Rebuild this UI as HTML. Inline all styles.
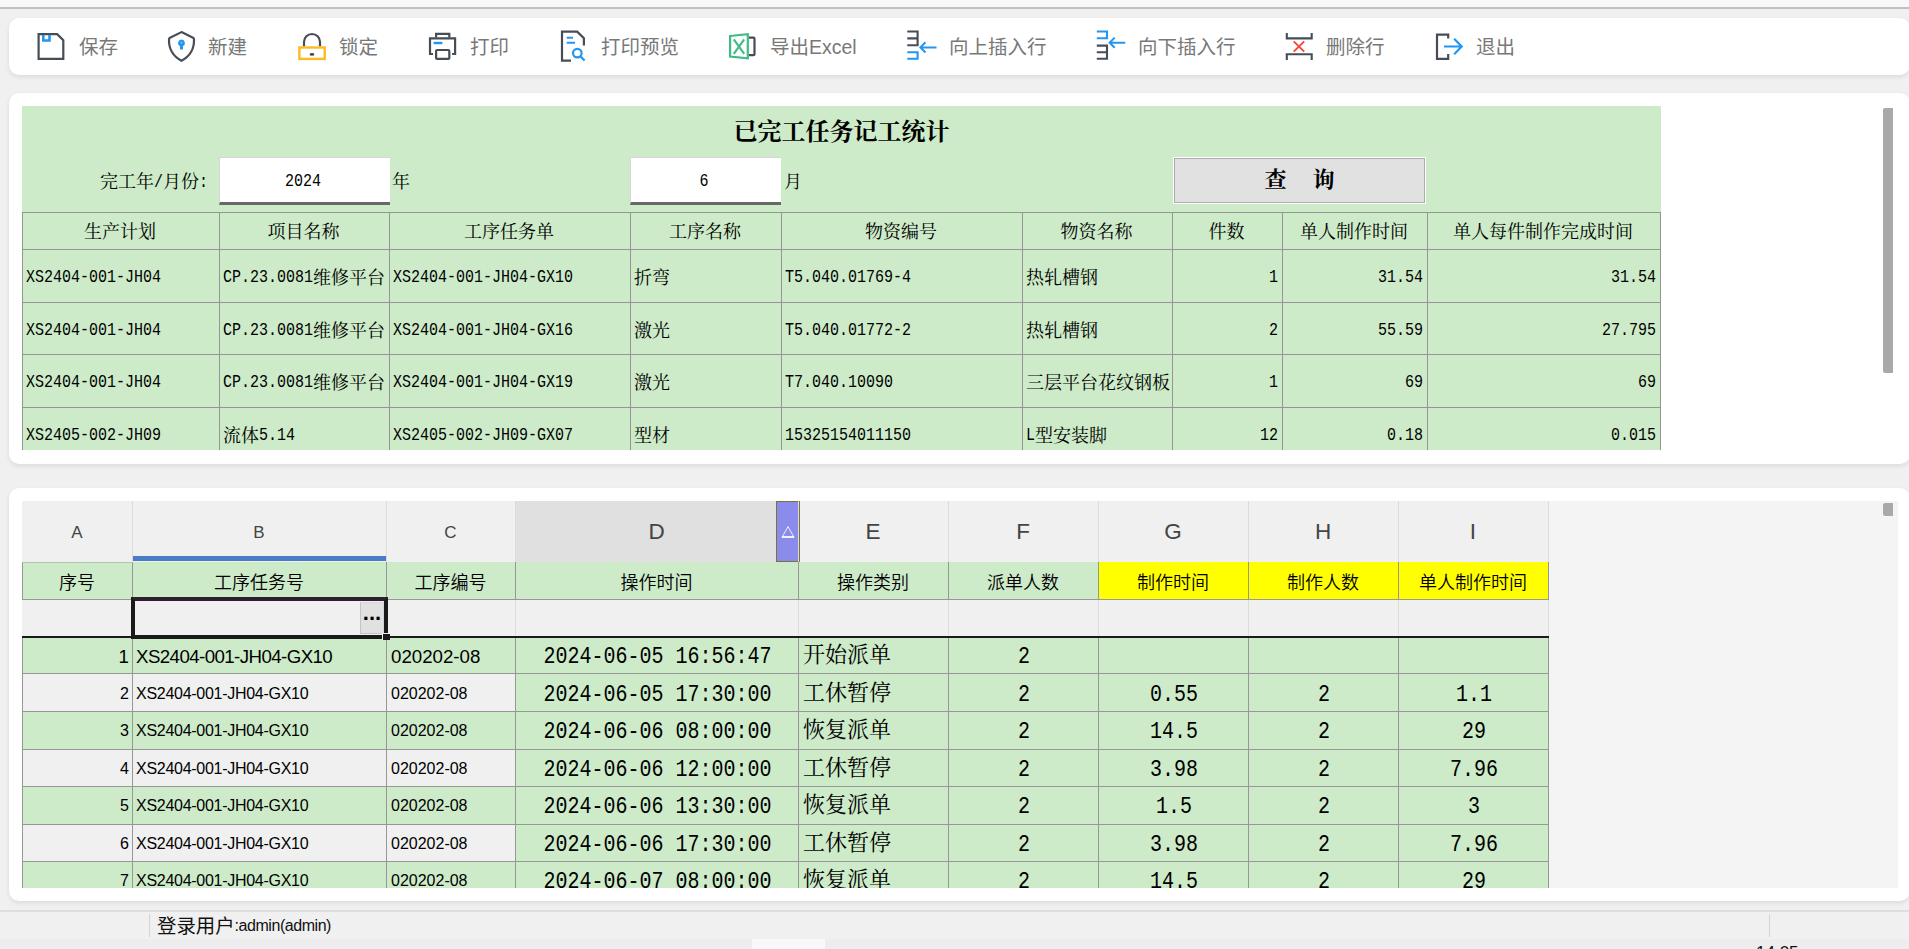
<!DOCTYPE html>
<html lang="zh-CN"><head><meta charset="utf-8"><title>已完工任务记工统计</title><style>
*{box-sizing:border-box;margin:0;padding:0}
html,body{width:1909px;height:949px;overflow:hidden;background:#f0f0f0}
body{position:relative;font-family:"Liberation Sans","Noto Sans CJK SC",sans-serif;color:#000}
.abs{position:absolute}
.topstrip{left:0;top:0;width:1909px;height:9px;background:#f8f8f8;border-bottom:2px solid #c0c0c0}
.panel{background:#fff;border-radius:10px;box-shadow:0 2px 5px rgba(0,0,0,.09)}
.tb{position:absolute;top:19px;height:57px;font-family:"Liberation Sans","Noto Sans CJK SC",sans-serif;font-size:19.5px;font-weight:400;color:#787878;line-height:57px;white-space:nowrap}
.tb svg{position:absolute;top:0;left:0}
.song{font-family:"Liberation Serif","Noto Serif CJK SC",serif}
.m{font-family:"Liberation Mono",monospace;font-size:15px;display:inline-block;position:relative;top:-1.5px;transform:scaleY(1.2);transform-origin:50% 60%}
.t1{position:absolute;font-family:"Liberation Serif","Noto Serif CJK SC",serif;font-size:18px;line-height:20px;white-space:nowrap;color:#000}
.vl{position:absolute;width:1px;background:#959595}
.hl{position:absolute;height:1px;background:#959595}
.g2{position:absolute;white-space:nowrap}
</style></head><body>
<div class="abs topstrip"></div>
<div class="abs panel" style="left:9px;top:18px;width:1901px;height:57px"></div>
<svg class="abs" style="left:0;top:18px" width="1909" height="57" viewBox="0 18 1909 57"><path d="M38.6 34.2 H57.2 L63.3 40.3 V58.9 H38.6 Z" fill="none" stroke-width="2.2" stroke-linejoin="miter" stroke="#464d57"/><path d="M42 35 H50.8 V41.8 H42 Z M44.6 35 V39.3 H48.2 V35 Z" fill="#2196f3" fill-rule="evenodd"/><path d="M181.5 32.1 L193 37.7 Q194 38.2 194 39.4 C194.3 48.6 189.5 56.5 181.5 60.8 C173.5 56.5 168.7 48.6 169 39.4 Q169 38.2 170 37.7 Z" fill="none" stroke-width="2.2" stroke-linejoin="miter" stroke="#464d57" stroke-linejoin="round"/><path d="M181.5 39.6 a3.4 3.4 0 0 1 1.5 6.45 V49.6 H180 V46.05 A3.4 3.4 0 0 1 181.5 39.6 Z" fill="#2196f3"/><circle cx="181.5" cy="42.6" r="0.9" fill="#9fd2fb"/><path d="M304 46.5 V42 a8 8 0 0 1 16 0 V46.5" fill="none" stroke-width="2.2" stroke-linejoin="miter" stroke="#464d57"/><rect x="299.4" y="47.5" width="25.3" height="11.4" fill="none" stroke="#fdbb1f" stroke-width="2.4"/><ellipse cx="312" cy="54.4" rx="2.4" ry="1.3" fill="#464d57"/><path d="M436.1 37.5 V33.9 H449.3 V37.5" fill="none" stroke-width="2.2" stroke-linejoin="miter" stroke="#464d57"/><path d="M433 54 H430 V38.4 H455.1 V54 H452.1" fill="none" stroke-width="2.2" stroke-linejoin="miter" stroke="#464d57"/><rect x="436.1" y="50" width="13.2" height="8.9" rx="1" fill="none" stroke-width="2.2" stroke-linejoin="miter" stroke="#464d57"/><path d="M433.6 43 H442.4" fill="none" stroke="#2196f3" stroke-width="2.4"/><path d="M571 60.6 H562 V31.6 H577.2 L583.9 38.3 V45.6" fill="none" stroke-width="2.2" stroke-linejoin="miter" stroke="#464d57" stroke-linejoin="round"/><path d="M566.7 37.7 H573 M566.7 42.7 H575" fill="none" stroke="#2196f3" stroke-width="2.1"/><circle cx="577.3" cy="53.1" r="4.3" fill="none" stroke="#2196f3" stroke-width="2.2"/><path d="M580.5 56.4 L584.6 60.6" fill="none" stroke="#2196f3" stroke-width="2.2"/><path d="M730.1 36 L747.8 34.2 V58.4 L730.1 56.5 Z" fill="none" stroke-width="2.2" stroke-linejoin="miter" stroke="#3fbb86" stroke-linejoin="round"/><path d="M733.8 39.3 L744.2 53.8 M744.2 39.3 L733.8 53.8" fill="none" stroke="#3fbb86" stroke-width="2.1"/><path d="M749 37.6 H753.5 a1 1 0 0 1 1 1 V54.2 a1 1 0 0 1 -1 1 H749" fill="none" stroke-width="2.2" stroke-linejoin="miter" stroke="#464d57"/><path d="M907.3 31.5 H917.6 V45.3 H907.3 M907.3 38.4 H917.6" fill="none" stroke-width="2.1" stroke-linejoin="miter" stroke="#464d57"/><path d="M907.3 52.2 H917.6 V58.8 H907.3" fill="none" stroke-width="2.1" stroke-linejoin="miter" stroke="#2196f3"/><path d="M936.5 47.4 H920.5 M925.5 42.3 L920.4 47.4 L925.5 52.5" fill="none" stroke-width="2" stroke-linejoin="miter" stroke="#2196f3"/><path d="M1096.8 31.5 H1107 V38.3 H1096.8" fill="none" stroke-width="2.1" stroke-linejoin="miter" stroke="#2196f3"/><path d="M1096.8 45.6 H1107 V58.8 H1096.8 M1096.8 52.2 H1107" fill="none" stroke-width="2.1" stroke-linejoin="miter" stroke="#464d57"/><path d="M1125.2 42.7 H1109.6 M1114.7 37.6 L1109.6 42.7 L1114.7 47.8" fill="none" stroke-width="2" stroke-linejoin="miter" stroke="#2196f3"/><path d="M1286.8 33 V38.4 H1311.7 V33 M1286.8 60 V54.2 H1311.7 V60" fill="none" stroke-width="2.1" stroke-linejoin="miter" stroke="#464d57"/><path d="M1293.7 41.4 L1304.2 51.6 M1304.2 41.4 L1293.7 51.6" fill="none" stroke="#f4493c" stroke-width="2"/><path d="M1448.2 38.6 V34.6 H1437 V58.9 H1448.2 V54" fill="none" stroke-width="2.2" stroke-linejoin="miter" stroke="#464d57"/><path d="M1444 46.5 H1461 M1454.2 38.8 L1461.7 46.5 L1454.2 54.2" fill="none" stroke-width="2.2" stroke-linejoin="miter" stroke="#2196f3"/></svg>
<div class="tb" style="left:79px">保存</div>
<div class="tb" style="left:208px">新建</div>
<div class="tb" style="left:339px">锁定</div>
<div class="tb" style="left:470px">打印</div>
<div class="tb" style="left:601px">打印预览</div>
<div class="tb" style="left:770px">导出Excel</div>
<div class="tb" style="left:949px">向上插入行</div>
<div class="tb" style="left:1138px">向下插入行</div>
<div class="tb" style="left:1326px">删除行</div>
<div class="tb" style="left:1476px">退出</div>
<div class="abs panel" style="left:9px;top:93px;width:1901px;height:371px"></div>
<div class="abs" style="left:22px;top:106px;width:1639px;height:344px;background:#cdebc9;overflow:hidden">
<div class="vl" style="left:0px;top:106px;height:238px"></div>
<div class="vl" style="left:197px;top:106px;height:238px"></div>
<div class="vl" style="left:367px;top:106px;height:238px"></div>
<div class="vl" style="left:608px;top:106px;height:238px"></div>
<div class="vl" style="left:759px;top:106px;height:238px"></div>
<div class="vl" style="left:1000px;top:106px;height:238px"></div>
<div class="vl" style="left:1150px;top:106px;height:238px"></div>
<div class="vl" style="left:1260px;top:106px;height:238px"></div>
<div class="vl" style="left:1405px;top:106px;height:238px"></div>
<div class="vl" style="left:1638px;top:106px;height:238px"></div>
<div class="hl" style="left:0px;top:106px;width:1639px"></div>
<div class="hl" style="left:0px;top:143px;width:1639px"></div>
<div class="hl" style="left:0px;top:196px;width:1639px"></div>
<div class="hl" style="left:0px;top:248px;width:1639px"></div>
<div class="hl" style="left:0px;top:301px;width:1639px"></div>
<div class="t1" style="left:0;top:11.5px;width:1639px;text-align:center;font-size:24px;font-weight:bold;line-height:28px;padding-left:0px">已完工任务记工统计</div>
<div class="t1" style="left:66px;top:66px;width:120px;text-align:right">完工年<span class="m">/</span>月份<span class="m">:</span></div>
<div class="abs" style="left:197px;top:51px;width:171px;height:48px;background:#fff;border-top:1px solid #d6d6d6;border-left:1px solid #d6d6d6;border-bottom:3px solid #686868"></div>
<div class="t1" style="left:196px;top:65px;width:170px;text-align:center"><span class="m">2024</span></div>
<div class="t1" style="left:370px;top:66px">年</div>
<div class="abs" style="left:608px;top:51px;width:151px;height:48px;background:#fff;border-top:1px solid #d6d6d6;border-left:1px solid #d6d6d6;border-bottom:3px solid #686868"></div>
<div class="t1" style="left:607px;top:65px;width:150px;text-align:center"><span class="m">6</span></div>
<div class="t1" style="left:762px;top:66px">月</div>
<div class="abs" style="left:1151px;top:51px;width:253px;height:47px;background:#e1e1e1;border:1px solid #fff;outline:0"><div style="position:absolute;left:0;top:0;right:0;bottom:0;border:1px solid #adadad"></div></div>
<div class="t1" style="left:1151px;top:61px;width:253px;text-align:center;font-size:22px;font-weight:bold;line-height:26px;letter-spacing:0;word-spacing:0">查<span style="display:inline-block;width:26px"></span>询</div>
<div class="t1" style="left:0px;top:116px;width:196px;text-align:center">生产计划</div>
<div class="t1" style="left:197px;top:116px;width:169px;text-align:center">项目名称</div>
<div class="t1" style="left:367px;top:116px;width:240px;text-align:center">工序任务单</div>
<div class="t1" style="left:608px;top:116px;width:150px;text-align:center">工序名称</div>
<div class="t1" style="left:759px;top:116px;width:240px;text-align:center">物资编号</div>
<div class="t1" style="left:1000px;top:116px;width:149px;text-align:center">物资名称</div>
<div class="t1" style="left:1150px;top:116px;width:109px;text-align:center">件数</div>
<div class="t1" style="left:1260px;top:116px;width:144px;text-align:center">单人制作时间</div>
<div class="t1" style="left:1405px;top:116px;width:232px;text-align:center">单人每件制作完成时间</div>
<div class="t1" style="left:4px;top:161.5px"><span class="m">XS2404-001-JH04</span></div>
<div class="t1" style="left:201px;top:161.5px"><span class="m">CP.23.0081</span>维修平台</div>
<div class="t1" style="left:371px;top:161.5px"><span class="m">XS2404-001-JH04-GX10</span></div>
<div class="t1" style="left:612px;top:161.5px">折弯</div>
<div class="t1" style="left:763px;top:161.5px"><span class="m">T5.040.01769-4</span></div>
<div class="t1" style="left:1004px;top:161.5px">热轧槽钢</div>
<div class="t1" style="left:1151px;top:161.5px;width:109px;text-align:right;padding-right:4px"><span class="m">1</span></div>
<div class="t1" style="left:1261px;top:161.5px;width:144px;text-align:right;padding-right:4px"><span class="m">31.54</span></div>
<div class="t1" style="left:1406px;top:161.5px;width:232px;text-align:right;padding-right:4px"><span class="m">31.54</span></div>
<div class="t1" style="left:4px;top:214.5px"><span class="m">XS2404-001-JH04</span></div>
<div class="t1" style="left:201px;top:214.5px"><span class="m">CP.23.0081</span>维修平台</div>
<div class="t1" style="left:371px;top:214.5px"><span class="m">XS2404-001-JH04-GX16</span></div>
<div class="t1" style="left:612px;top:214.5px">激光</div>
<div class="t1" style="left:763px;top:214.5px"><span class="m">T5.040.01772-2</span></div>
<div class="t1" style="left:1004px;top:214.5px">热轧槽钢</div>
<div class="t1" style="left:1151px;top:214.5px;width:109px;text-align:right;padding-right:4px"><span class="m">2</span></div>
<div class="t1" style="left:1261px;top:214.5px;width:144px;text-align:right;padding-right:4px"><span class="m">55.59</span></div>
<div class="t1" style="left:1406px;top:214.5px;width:232px;text-align:right;padding-right:4px"><span class="m">27.795</span></div>
<div class="t1" style="left:4px;top:266.5px"><span class="m">XS2404-001-JH04</span></div>
<div class="t1" style="left:201px;top:266.5px"><span class="m">CP.23.0081</span>维修平台</div>
<div class="t1" style="left:371px;top:266.5px"><span class="m">XS2404-001-JH04-GX19</span></div>
<div class="t1" style="left:612px;top:266.5px">激光</div>
<div class="t1" style="left:763px;top:266.5px"><span class="m">T7.040.10090</span></div>
<div class="t1" style="left:1004px;top:266.5px">三层平台花纹钢板</div>
<div class="t1" style="left:1151px;top:266.5px;width:109px;text-align:right;padding-right:4px"><span class="m">1</span></div>
<div class="t1" style="left:1261px;top:266.5px;width:144px;text-align:right;padding-right:4px"><span class="m">69</span></div>
<div class="t1" style="left:1406px;top:266.5px;width:232px;text-align:right;padding-right:4px"><span class="m">69</span></div>
<div class="t1" style="left:4px;top:319.5px"><span class="m">XS2405-002-JH09</span></div>
<div class="t1" style="left:201px;top:319.5px">流体<span class="m">5.14</span></div>
<div class="t1" style="left:371px;top:319.5px"><span class="m">XS2405-002-JH09-GX07</span></div>
<div class="t1" style="left:612px;top:319.5px">型材</div>
<div class="t1" style="left:763px;top:319.5px"><span class="m">15325154011150</span></div>
<div class="t1" style="left:1004px;top:319.5px"><span class="m">L</span>型安装脚</div>
<div class="t1" style="left:1151px;top:319.5px;width:109px;text-align:right;padding-right:4px"><span class="m">12</span></div>
<div class="t1" style="left:1261px;top:319.5px;width:144px;text-align:right;padding-right:4px"><span class="m">0.18</span></div>
<div class="t1" style="left:1406px;top:319.5px;width:232px;text-align:right;padding-right:4px"><span class="m">0.015</span></div>
</div>
<div class="abs" style="left:1883px;top:108px;width:10px;height:265px;background:#a9a9a9;border-radius:2px 0 0 2px"></div>
<div class="abs panel" style="left:9px;top:488px;width:1901px;height:413px"></div>
<div class="abs" style="left:22px;top:501px;width:1876px;height:387px;background:#f4f4f4;overflow:hidden">
<div class="abs" style="left:0px;top:0px;width:1527px;height:61px;background:#f0f0f0;"></div>
<div class="abs" style="left:494px;top:0px;width:260px;height:61px;background:#e0e0e0;"></div>
<div class="abs" style="left:754px;top:0px;width:24px;height:61px;background:#8b8bec;border:1px solid #77733f"></div>
<svg class="abs" style="left:759px;top:24px" width="14" height="14" viewBox="0 0 14 14"><path d="M1.2 12 L7 1.6 L12.8 12 Z" fill="none" stroke="#fff" stroke-width="1" stroke-opacity=".85"/><path d="M0.8 12 H13.2" stroke="#fff" stroke-width="1.6"/></svg>
<div class="abs" style="left:111px;top:55px;width:253px;height:5px;background:#4a7bc8;"></div>
<div class="abs" style="left:0px;top:61px;width:1076px;height:38px;background:#cdebc9;"></div>
<div class="abs" style="left:1077px;top:61px;width:450px;height:38px;background:#ffff00;"></div>
<div class="abs" style="left:0px;top:99px;width:1527px;height:37px;background:#f0f0f0;"></div>
<div class="abs" style="left:0px;top:136px;width:1527px;height:37px;background:#cdebc9;"></div>
<div class="abs" style="left:0px;top:173px;width:494px;height:38px;background:#f0f0f0;"></div>
<div class="abs" style="left:494px;top:173px;width:1033px;height:38px;background:#cdebc9;"></div>
<div class="abs" style="left:0px;top:211px;width:1527px;height:38px;background:#cdebc9;"></div>
<div class="abs" style="left:0px;top:249px;width:494px;height:37px;background:#f0f0f0;"></div>
<div class="abs" style="left:494px;top:249px;width:1033px;height:37px;background:#cdebc9;"></div>
<div class="abs" style="left:0px;top:286px;width:1527px;height:38px;background:#cdebc9;"></div>
<div class="abs" style="left:0px;top:324px;width:494px;height:37px;background:#f0f0f0;"></div>
<div class="abs" style="left:494px;top:324px;width:1033px;height:37px;background:#cdebc9;"></div>
<div class="abs" style="left:0px;top:361px;width:1527px;height:38px;background:#cdebc9;"></div>
<div class="abs" style="left:110px;top:0px;width:1px;height:61px;background:#dcdcdc"></div>
<div class="abs" style="left:110px;top:61px;width:1px;height:37px;background:#979797"></div>
<div class="abs" style="left:110px;top:98px;width:1px;height:37px;background:#dcdcdc"></div>
<div class="abs" style="left:110px;top:135px;width:1px;height:264px;background:#979797"></div>
<div class="abs" style="left:364px;top:0px;width:1px;height:61px;background:#dcdcdc"></div>
<div class="abs" style="left:364px;top:61px;width:1px;height:37px;background:#979797"></div>
<div class="abs" style="left:364px;top:98px;width:1px;height:37px;background:#dcdcdc"></div>
<div class="abs" style="left:364px;top:135px;width:1px;height:264px;background:#979797"></div>
<div class="abs" style="left:493px;top:0px;width:1px;height:61px;background:#dcdcdc"></div>
<div class="abs" style="left:493px;top:61px;width:1px;height:37px;background:#979797"></div>
<div class="abs" style="left:493px;top:98px;width:1px;height:37px;background:#dcdcdc"></div>
<div class="abs" style="left:493px;top:135px;width:1px;height:264px;background:#979797"></div>
<div class="abs" style="left:776px;top:0px;width:1px;height:61px;background:#dcdcdc"></div>
<div class="abs" style="left:776px;top:61px;width:1px;height:37px;background:#979797"></div>
<div class="abs" style="left:776px;top:98px;width:1px;height:37px;background:#dcdcdc"></div>
<div class="abs" style="left:776px;top:135px;width:1px;height:264px;background:#979797"></div>
<div class="abs" style="left:926px;top:0px;width:1px;height:61px;background:#dcdcdc"></div>
<div class="abs" style="left:926px;top:61px;width:1px;height:37px;background:#979797"></div>
<div class="abs" style="left:926px;top:98px;width:1px;height:37px;background:#dcdcdc"></div>
<div class="abs" style="left:926px;top:135px;width:1px;height:264px;background:#979797"></div>
<div class="abs" style="left:1076px;top:0px;width:1px;height:61px;background:#dcdcdc"></div>
<div class="abs" style="left:1076px;top:61px;width:1px;height:37px;background:#979797"></div>
<div class="abs" style="left:1076px;top:98px;width:1px;height:37px;background:#dcdcdc"></div>
<div class="abs" style="left:1076px;top:135px;width:1px;height:264px;background:#979797"></div>
<div class="abs" style="left:1226px;top:0px;width:1px;height:61px;background:#dcdcdc"></div>
<div class="abs" style="left:1226px;top:61px;width:1px;height:37px;background:#979797"></div>
<div class="abs" style="left:1226px;top:98px;width:1px;height:37px;background:#dcdcdc"></div>
<div class="abs" style="left:1226px;top:135px;width:1px;height:264px;background:#979797"></div>
<div class="abs" style="left:1376px;top:0px;width:1px;height:61px;background:#dcdcdc"></div>
<div class="abs" style="left:1376px;top:61px;width:1px;height:37px;background:#979797"></div>
<div class="abs" style="left:1376px;top:98px;width:1px;height:37px;background:#dcdcdc"></div>
<div class="abs" style="left:1376px;top:135px;width:1px;height:264px;background:#979797"></div>
<div class="abs" style="left:1526px;top:0px;width:1px;height:61px;background:#dcdcdc"></div>
<div class="abs" style="left:1526px;top:61px;width:1px;height:37px;background:#979797"></div>
<div class="abs" style="left:1526px;top:98px;width:1px;height:37px;background:#dcdcdc"></div>
<div class="abs" style="left:1526px;top:135px;width:1px;height:264px;background:#979797"></div>
<div class="abs" style="left:0px;top:61px;width:1px;height:37px;background:#979797"></div>
<div class="abs" style="left:0px;top:135px;width:1px;height:264px;background:#979797"></div>
<div class="abs" style="left:0px;top:98px;width:1527px;height:1px;background:#979797"></div>
<div class="abs" style="left:0px;top:61px;width:111px;height:1px;background:#b4c4b2"></div>
<div class="abs" style="left:0px;top:172px;width:1527px;height:1px;background:#979797"></div>
<div class="abs" style="left:0px;top:210px;width:1527px;height:1px;background:#979797"></div>
<div class="abs" style="left:0px;top:248px;width:1527px;height:1px;background:#979797"></div>
<div class="abs" style="left:0px;top:285px;width:1527px;height:1px;background:#979797"></div>
<div class="abs" style="left:0px;top:323px;width:1527px;height:1px;background:#979797"></div>
<div class="abs" style="left:0px;top:360px;width:1527px;height:1px;background:#979797"></div>
<div class="abs" style="left:0px;top:398px;width:1527px;height:1px;background:#979797"></div>
<div class="abs" style="left:0px;top:135px;width:1527px;height:2px;background:#1a1a1a"></div>
<div class="abs" style="left:109px;top:96px;width:257px;height:41.5px;border:4px solid #1a1a1a;border-top-color:#2e1f2e"></div>
<div class="abs" style="left:338px;top:101px;width:24px;height:32px;background:#e1e1e1;border:1px solid #c4c4c4;border-right-color:#d4d4d4;border-top-color:#d8d8d8"></div>
<div class="g2" style="left:338px;top:102px;width:24px;text-align:center;font-size:22px;font-weight:bold;line-height:20px">...</div>
<div class="abs" style="left:360px;top:132px;width:8px;height:7px;background:#1a1a1a;border-top:1px solid #f0f0f0;border-left:1px solid #f0f0f0"></div>
<div class="g2" style="left:0px;top:17.0px;width:110px;text-align:center;font-size:17px;line-height:30px;color:#444">A</div>
<div class="g2" style="left:110px;top:17.0px;width:254px;text-align:center;font-size:17px;line-height:30px;color:#444">B</div>
<div class="g2" style="left:364px;top:17.0px;width:129px;text-align:center;font-size:17px;line-height:30px;color:#444">C</div>
<div class="g2" style="left:493px;top:16.3px;width:283px;text-align:center;font-size:22.5px;line-height:30px;color:#444">D</div>
<div class="g2" style="left:776px;top:16.3px;width:150px;text-align:center;font-size:22.5px;line-height:30px;color:#444">E</div>
<div class="g2" style="left:926px;top:16.3px;width:150px;text-align:center;font-size:22.5px;line-height:30px;color:#444">F</div>
<div class="g2" style="left:1076px;top:16.3px;width:150px;text-align:center;font-size:22.5px;line-height:30px;color:#444">G</div>
<div class="g2" style="left:1226px;top:16.3px;width:150px;text-align:center;font-size:22.5px;line-height:30px;color:#444">H</div>
<div class="g2" style="left:1376px;top:16.3px;width:150px;text-align:center;font-size:22.5px;line-height:30px;color:#444">I</div>
<div class="g2" style="left:0px;top:70.3px;width:110px;text-align:center;font-size:18px;line-height:24px;font-weight:350;color:#000">序号</div>
<div class="g2" style="left:110px;top:70.3px;width:254px;text-align:center;font-size:18px;line-height:24px;font-weight:350;color:#000">工序任务号</div>
<div class="g2" style="left:364px;top:70.3px;width:129px;text-align:center;font-size:18px;line-height:24px;font-weight:350;color:#000">工序编号</div>
<div class="g2" style="left:493px;top:70.3px;width:283px;text-align:center;font-size:18px;line-height:24px;font-weight:350;color:#000">操作时间</div>
<div class="g2" style="left:776px;top:70.3px;width:150px;text-align:center;font-size:18px;line-height:24px;font-weight:350;color:#000">操作类别</div>
<div class="g2" style="left:926px;top:70.3px;width:150px;text-align:center;font-size:18px;line-height:24px;font-weight:350;color:#000">派单人数</div>
<div class="g2" style="left:1076px;top:70.3px;width:150px;text-align:center;font-size:18px;line-height:24px;font-weight:350;color:#000">制作时间</div>
<div class="g2" style="left:1226px;top:70.3px;width:150px;text-align:center;font-size:18px;line-height:24px;font-weight:350;color:#000">制作人数</div>
<div class="g2" style="left:1376px;top:70.3px;width:150px;text-align:center;font-size:18px;line-height:24px;font-weight:350;color:#000">单人制作时间</div>
<div class="g2" style="left:0px;top:143.7px;width:110px;text-align:right;padding-right:3px;font-size:18.7px;line-height:24px;">1</div>
<div class="g2" style="left:114px;top:143.7px;letter-spacing:-0.58px;font-size:18.7px;line-height:24px;">XS2404-001-JH04-GX10</div>
<div class="g2" style="left:369px;top:143.7px;font-size:18.7px;line-height:24px;">020202-08</div>
<div class="g2" style="left:494px;top:144.0px;width:283px;text-align:center;font-family:'Liberation Mono',monospace;font-size:20px;line-height:24px;"><span style="display:inline-block;transform:scaleY(1.15)">2024-06-05 16:56:47</span></div>
<div class="g2 song" style="left:781px;top:142.0px;font-size:22px;line-height:24px">开始派单</div>
<div class="g2" style="left:927px;top:144.0px;width:150px;text-align:center;font-family:'Liberation Mono',monospace;font-size:20px;line-height:24px;"><span style="display:inline-block;transform:scaleY(1.15)">2</span></div>
<div class="g2" style="left:0px;top:180.8px;width:110px;text-align:right;padding-right:3px;font-size:16px;line-height:24px;">2</div>
<div class="g2" style="left:114px;top:180.8px;letter-spacing:-0.28px;font-size:16px;line-height:24px;">XS2404-001-JH04-GX10</div>
<div class="g2" style="left:369px;top:180.8px;font-size:16px;line-height:24px;">020202-08</div>
<div class="g2" style="left:494px;top:181.5px;width:283px;text-align:center;font-family:'Liberation Mono',monospace;font-size:20px;line-height:24px;"><span style="display:inline-block;transform:scaleY(1.15)">2024-06-05 17:30:00</span></div>
<div class="g2 song" style="left:781px;top:179.5px;font-size:22px;line-height:24px">工休暂停</div>
<div class="g2" style="left:927px;top:181.5px;width:150px;text-align:center;font-family:'Liberation Mono',monospace;font-size:20px;line-height:24px;"><span style="display:inline-block;transform:scaleY(1.15)">2</span></div>
<div class="g2" style="left:1077px;top:181.5px;width:150px;text-align:center;font-family:'Liberation Mono',monospace;font-size:20px;line-height:24px;"><span style="display:inline-block;transform:scaleY(1.15)">0.55</span></div>
<div class="g2" style="left:1227px;top:181.5px;width:150px;text-align:center;font-family:'Liberation Mono',monospace;font-size:20px;line-height:24px;"><span style="display:inline-block;transform:scaleY(1.15)">2</span></div>
<div class="g2" style="left:1377px;top:181.5px;width:150px;text-align:center;font-family:'Liberation Mono',monospace;font-size:20px;line-height:24px;"><span style="display:inline-block;transform:scaleY(1.15)">1.1</span></div>
<div class="g2" style="left:0px;top:218.3px;width:110px;text-align:right;padding-right:3px;font-size:16px;line-height:24px;">3</div>
<div class="g2" style="left:114px;top:218.3px;letter-spacing:-0.28px;font-size:16px;line-height:24px;">XS2404-001-JH04-GX10</div>
<div class="g2" style="left:369px;top:218.3px;font-size:16px;line-height:24px;">020202-08</div>
<div class="g2" style="left:494px;top:219.0px;width:283px;text-align:center;font-family:'Liberation Mono',monospace;font-size:20px;line-height:24px;"><span style="display:inline-block;transform:scaleY(1.15)">2024-06-06 08:00:00</span></div>
<div class="g2 song" style="left:781px;top:217.0px;font-size:22px;line-height:24px">恢复派单</div>
<div class="g2" style="left:927px;top:219.0px;width:150px;text-align:center;font-family:'Liberation Mono',monospace;font-size:20px;line-height:24px;"><span style="display:inline-block;transform:scaleY(1.15)">2</span></div>
<div class="g2" style="left:1077px;top:219.0px;width:150px;text-align:center;font-family:'Liberation Mono',monospace;font-size:20px;line-height:24px;"><span style="display:inline-block;transform:scaleY(1.15)">14.5</span></div>
<div class="g2" style="left:1227px;top:219.0px;width:150px;text-align:center;font-family:'Liberation Mono',monospace;font-size:20px;line-height:24px;"><span style="display:inline-block;transform:scaleY(1.15)">2</span></div>
<div class="g2" style="left:1377px;top:219.0px;width:150px;text-align:center;font-family:'Liberation Mono',monospace;font-size:20px;line-height:24px;"><span style="display:inline-block;transform:scaleY(1.15)">29</span></div>
<div class="g2" style="left:0px;top:255.8px;width:110px;text-align:right;padding-right:3px;font-size:16px;line-height:24px;">4</div>
<div class="g2" style="left:114px;top:255.8px;letter-spacing:-0.28px;font-size:16px;line-height:24px;">XS2404-001-JH04-GX10</div>
<div class="g2" style="left:369px;top:255.8px;font-size:16px;line-height:24px;">020202-08</div>
<div class="g2" style="left:494px;top:256.5px;width:283px;text-align:center;font-family:'Liberation Mono',monospace;font-size:20px;line-height:24px;"><span style="display:inline-block;transform:scaleY(1.15)">2024-06-06 12:00:00</span></div>
<div class="g2 song" style="left:781px;top:254.5px;font-size:22px;line-height:24px">工休暂停</div>
<div class="g2" style="left:927px;top:256.5px;width:150px;text-align:center;font-family:'Liberation Mono',monospace;font-size:20px;line-height:24px;"><span style="display:inline-block;transform:scaleY(1.15)">2</span></div>
<div class="g2" style="left:1077px;top:256.5px;width:150px;text-align:center;font-family:'Liberation Mono',monospace;font-size:20px;line-height:24px;"><span style="display:inline-block;transform:scaleY(1.15)">3.98</span></div>
<div class="g2" style="left:1227px;top:256.5px;width:150px;text-align:center;font-family:'Liberation Mono',monospace;font-size:20px;line-height:24px;"><span style="display:inline-block;transform:scaleY(1.15)">2</span></div>
<div class="g2" style="left:1377px;top:256.5px;width:150px;text-align:center;font-family:'Liberation Mono',monospace;font-size:20px;line-height:24px;"><span style="display:inline-block;transform:scaleY(1.15)">7.96</span></div>
<div class="g2" style="left:0px;top:293.3px;width:110px;text-align:right;padding-right:3px;font-size:16px;line-height:24px;">5</div>
<div class="g2" style="left:114px;top:293.3px;letter-spacing:-0.28px;font-size:16px;line-height:24px;">XS2404-001-JH04-GX10</div>
<div class="g2" style="left:369px;top:293.3px;font-size:16px;line-height:24px;">020202-08</div>
<div class="g2" style="left:494px;top:294.0px;width:283px;text-align:center;font-family:'Liberation Mono',monospace;font-size:20px;line-height:24px;"><span style="display:inline-block;transform:scaleY(1.15)">2024-06-06 13:30:00</span></div>
<div class="g2 song" style="left:781px;top:292.0px;font-size:22px;line-height:24px">恢复派单</div>
<div class="g2" style="left:927px;top:294.0px;width:150px;text-align:center;font-family:'Liberation Mono',monospace;font-size:20px;line-height:24px;"><span style="display:inline-block;transform:scaleY(1.15)">2</span></div>
<div class="g2" style="left:1077px;top:294.0px;width:150px;text-align:center;font-family:'Liberation Mono',monospace;font-size:20px;line-height:24px;"><span style="display:inline-block;transform:scaleY(1.15)">1.5</span></div>
<div class="g2" style="left:1227px;top:294.0px;width:150px;text-align:center;font-family:'Liberation Mono',monospace;font-size:20px;line-height:24px;"><span style="display:inline-block;transform:scaleY(1.15)">2</span></div>
<div class="g2" style="left:1377px;top:294.0px;width:150px;text-align:center;font-family:'Liberation Mono',monospace;font-size:20px;line-height:24px;"><span style="display:inline-block;transform:scaleY(1.15)">3</span></div>
<div class="g2" style="left:0px;top:330.8px;width:110px;text-align:right;padding-right:3px;font-size:16px;line-height:24px;">6</div>
<div class="g2" style="left:114px;top:330.8px;letter-spacing:-0.28px;font-size:16px;line-height:24px;">XS2404-001-JH04-GX10</div>
<div class="g2" style="left:369px;top:330.8px;font-size:16px;line-height:24px;">020202-08</div>
<div class="g2" style="left:494px;top:331.5px;width:283px;text-align:center;font-family:'Liberation Mono',monospace;font-size:20px;line-height:24px;"><span style="display:inline-block;transform:scaleY(1.15)">2024-06-06 17:30:00</span></div>
<div class="g2 song" style="left:781px;top:329.5px;font-size:22px;line-height:24px">工休暂停</div>
<div class="g2" style="left:927px;top:331.5px;width:150px;text-align:center;font-family:'Liberation Mono',monospace;font-size:20px;line-height:24px;"><span style="display:inline-block;transform:scaleY(1.15)">2</span></div>
<div class="g2" style="left:1077px;top:331.5px;width:150px;text-align:center;font-family:'Liberation Mono',monospace;font-size:20px;line-height:24px;"><span style="display:inline-block;transform:scaleY(1.15)">3.98</span></div>
<div class="g2" style="left:1227px;top:331.5px;width:150px;text-align:center;font-family:'Liberation Mono',monospace;font-size:20px;line-height:24px;"><span style="display:inline-block;transform:scaleY(1.15)">2</span></div>
<div class="g2" style="left:1377px;top:331.5px;width:150px;text-align:center;font-family:'Liberation Mono',monospace;font-size:20px;line-height:24px;"><span style="display:inline-block;transform:scaleY(1.15)">7.96</span></div>
<div class="g2" style="left:0px;top:368.3px;width:110px;text-align:right;padding-right:3px;font-size:16px;line-height:24px;">7</div>
<div class="g2" style="left:114px;top:368.3px;letter-spacing:-0.28px;font-size:16px;line-height:24px;">XS2404-001-JH04-GX10</div>
<div class="g2" style="left:369px;top:368.3px;font-size:16px;line-height:24px;">020202-08</div>
<div class="g2" style="left:494px;top:369.0px;width:283px;text-align:center;font-family:'Liberation Mono',monospace;font-size:20px;line-height:24px;"><span style="display:inline-block;transform:scaleY(1.15)">2024-06-07 08:00:00</span></div>
<div class="g2 song" style="left:781px;top:367.0px;font-size:22px;line-height:24px">恢复派单</div>
<div class="g2" style="left:927px;top:369.0px;width:150px;text-align:center;font-family:'Liberation Mono',monospace;font-size:20px;line-height:24px;"><span style="display:inline-block;transform:scaleY(1.15)">2</span></div>
<div class="g2" style="left:1077px;top:369.0px;width:150px;text-align:center;font-family:'Liberation Mono',monospace;font-size:20px;line-height:24px;"><span style="display:inline-block;transform:scaleY(1.15)">14.5</span></div>
<div class="g2" style="left:1227px;top:369.0px;width:150px;text-align:center;font-family:'Liberation Mono',monospace;font-size:20px;line-height:24px;"><span style="display:inline-block;transform:scaleY(1.15)">2</span></div>
<div class="g2" style="left:1377px;top:369.0px;width:150px;text-align:center;font-family:'Liberation Mono',monospace;font-size:20px;line-height:24px;"><span style="display:inline-block;transform:scaleY(1.15)">29</span></div>
</div>
<div class="abs" style="left:1883px;top:503px;width:10px;height:13px;background:#a9a9a9;border-radius:2px 0 0 2px"></div>
<div class="abs" style="left:0;top:910px;width:1909px;height:2px;background:#dedede"></div>
<div class="abs" style="left:0;top:912px;width:1909px;height:27px;background:#f0f0f0"></div>
<div class="abs" style="left:149px;top:914px;width:1px;height:23px;background:#d4d4d4"></div>
<div class="abs" style="left:1769px;top:914px;width:1px;height:23px;background:#d4d4d4"></div>
<div class="abs" style="left:157px;top:914.5px;font-size:19.4px;line-height:22px;white-space:nowrap;color:#111">登录用户<span style="font-size:16px;letter-spacing:-0.45px;position:relative;top:-2px">:admin(admin)</span></div>
<div class="abs" style="left:0;top:939px;width:1909px;height:10px;background:#ededed"></div>
<div class="abs" style="left:752px;top:939px;width:73px;height:10px;background:#f8f8f8"></div>
<div class="abs" style="left:1756px;top:944.5px;font-size:17px;line-height:16px;color:#111;height:6px;overflow:hidden;white-space:nowrap">14:05</div>
</body></html>
